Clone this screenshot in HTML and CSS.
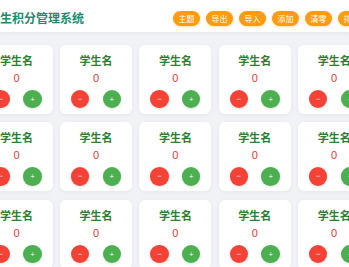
FILE: index.html
```html
<!DOCTYPE html>
<html lang="zh">
<head>
<meta charset="utf-8">
<title>学生积分管理系统</title>
<link rel="stylesheet" href="styles.css">
</head>
<body>
<header class="topbar">
  <h1 class="title">学生积分管理系统</h1>
  <nav class="actions">
    <button class="act">主题</button>
    <button class="act">导出</button>
    <button class="act">导入</button>
    <button class="act">添加</button>
    <button class="act">清零</button>
    <button class="act">排序</button>
  </nav>
</header>
<main class="grid">
  <div class="card"><div class="name">学生名</div><div class="score">0</div><div class="ops"><span class="op minus">−</span><span class="op plus">+</span></div></div>
  <div class="card"><div class="name">学生名</div><div class="score">0</div><div class="ops"><span class="op minus">−</span><span class="op plus">+</span></div></div>
  <div class="card"><div class="name">学生名</div><div class="score">0</div><div class="ops"><span class="op minus">−</span><span class="op plus">+</span></div></div>
  <div class="card"><div class="name">学生名</div><div class="score">0</div><div class="ops"><span class="op minus">−</span><span class="op plus">+</span></div></div>
  <div class="card"><div class="name">学生名</div><div class="score">0</div><div class="ops"><span class="op minus">−</span><span class="op plus">+</span></div></div>
  <div class="card"><div class="name">学生名</div><div class="score">0</div><div class="ops"><span class="op minus">−</span><span class="op plus">+</span></div></div>
  <div class="card"><div class="name">学生名</div><div class="score">0</div><div class="ops"><span class="op minus">−</span><span class="op plus">+</span></div></div>
  <div class="card"><div class="name">学生名</div><div class="score">0</div><div class="ops"><span class="op minus">−</span><span class="op plus">+</span></div></div>
  <div class="card"><div class="name">学生名</div><div class="score">0</div><div class="ops"><span class="op minus">−</span><span class="op plus">+</span></div></div>
  <div class="card"><div class="name">学生名</div><div class="score">0</div><div class="ops"><span class="op minus">−</span><span class="op plus">+</span></div></div>
  <div class="card"><div class="name">学生名</div><div class="score">0</div><div class="ops"><span class="op minus">−</span><span class="op plus">+</span></div></div>
  <div class="card"><div class="name">学生名</div><div class="score">0</div><div class="ops"><span class="op minus">−</span><span class="op plus">+</span></div></div>
  <div class="card"><div class="name">学生名</div><div class="score">0</div><div class="ops"><span class="op minus">−</span><span class="op plus">+</span></div></div>
  <div class="card"><div class="name">学生名</div><div class="score">0</div><div class="ops"><span class="op minus">−</span><span class="op plus">+</span></div></div>
  <div class="card"><div class="name">学生名</div><div class="score">0</div><div class="ops"><span class="op minus">−</span><span class="op plus">+</span></div></div>
  <div class="card"><div class="name">学生名</div><div class="score">0</div><div class="ops"><span class="op minus">−</span><span class="op plus">+</span></div></div>
  <div class="card"><div class="name">学生名</div><div class="score">0</div><div class="ops"><span class="op minus">−</span><span class="op plus">+</span></div></div>
  <div class="card"><div class="name">学生名</div><div class="score">0</div><div class="ops"><span class="op minus">−</span><span class="op plus">+</span></div></div>
</main>
</body>
</html>
```
FILE: styles.css
```css
html, body {
  margin: 0;
  padding: 0;
}
body {
  width: 349px;
  height: 267px;
  overflow: hidden;
  background: #f0f2f5;
  font-family: "Noto Sans CJK SC", "Noto Sans", sans-serif;
}
.topbar {
  height: 32px;
  background: #ffffff;
  box-shadow: 0 1px 4px rgba(0, 0, 0, 0.06);
  display: flex;
  align-items: center;
  white-space: nowrap;
  position: relative;
  z-index: 1;
}
.title {
  margin: 0 0 0 -12px;
  width: 184.7px;
  flex: none;
  font-size: 12px;
  font-weight: 700;
  color: #1f8a70;
  line-height: 16px;
  padding-top: 3px;
}
.actions {
  display: flex;
  gap: 5.4px;
  flex: none;
  padding-top: 5px;
}
.act {
  width: 27.6px;
  height: 15px;
  border: none;
  border-radius: 8px;
  background: #ff9b0f;
  color: #ffffff;
  font-family: "Noto Sans CJK SC", sans-serif;
  font-size: 8px;
  line-height: 15px;
  padding: 0;
  box-shadow: 0 1px 3px rgba(255, 152, 0, 0.3);
}
.grid {
  display: grid;
  grid-template-columns: repeat(6, 72px);
  column-gap: 7.4px;
  row-gap: 8.4px;
  margin-left: -19.4px;
  padding-top: 13px;
}
.card {
  height: 69px;
  box-sizing: border-box;
  background: #ffffff;
  border-radius: 6px;
  box-shadow: 0 1px 4px rgba(0, 0, 0, 0.05);
  display: flex;
  flex-direction: column;
  align-items: center;
  padding-top: 8px;
}
.name {
  font-size: 11px;
  font-weight: 700;
  color: #2e7d32;
  line-height: 14px;
}
.score {
  margin-top: 4px;
  font-size: 11px;
  color: #e53935;
  line-height: 14px;
  font-family: "Liberation Sans", sans-serif;
}
.ops {
  display: flex;
  gap: 13.4px;
  margin-top: 4.8px;
}
.op {
  width: 18.4px;
  height: 18.4px;
  border-radius: 50%;
  display: flex;
  align-items: center;
  justify-content: center;
  color: #ffffff;
  font-size: 6px;
  line-height: 1;
  font-family: "DejaVu Sans", sans-serif;
  box-shadow: 0 1px 3px rgba(0, 0, 0, 0.12);
}
.minus { background: #f44336; }
.plus { background: #4caf50; }
```
